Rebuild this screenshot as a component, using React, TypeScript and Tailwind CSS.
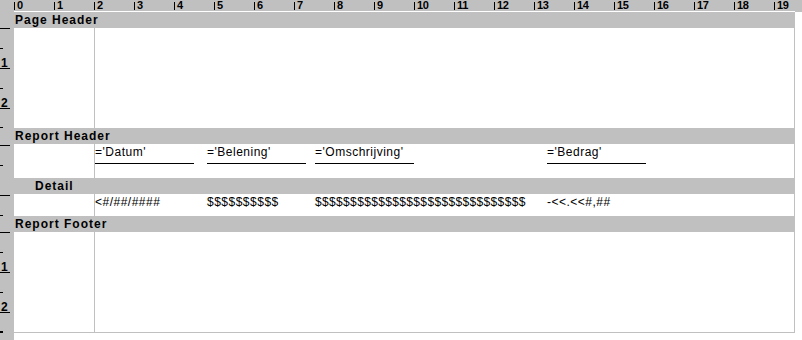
import React, { FC, ReactNode } from 'react';

type TMark = { y: number; kind: 'line' | 'tick' | 'num'; label?: string };

const RulerMarks: FC<{ height: number; marks: TMark[] }> = ({ height, marks }) => (
  <svg width={14} height={height} className="block shrink-0 bg-[#c0c0c0]">
    {marks.map((mark, index) => {
      if (mark.kind === 'tick') {
        return <rect key={index} x={0} y={mark.y} width={3} height={1} fill="#000" />;
      }
      if (mark.kind === 'line') {
        return <rect key={index} x={0} y={mark.y} width={10} height={1} fill="#000" />;
      }
      return (
        <g key={index}>
          <text
            x={1}
            y={mark.y - 1}
            fontSize={12}
            fontWeight={700}
            fontFamily="Liberation Sans, Arial, sans-serif"
            fill="#000"
          >
            {mark.label}
          </text>
          <rect x={0} y={mark.y} width={10} height={1} fill="#000" />
        </g>
      );
    })}
  </svg>
);

const TopRuler: FC = () => (
  <>
    <div className="flex h-[11px] bg-[#c0c0c0]">
      <div className="w-[14px] shrink-0" />
      {Array.from({ length: 20 }, (_, i) => (
        <div key={i} className={`shrink-0 flex items-start ${i === 19 ? 'w-[28px]' : 'w-[40px]'}`}>
          <div className="w-px h-[8px] mt-[2px] bg-black" />
          <span className="ml-[2px] text-[11px] font-bold leading-[11px] tracking-[-0.3px]">{i}</span>
        </div>
      ))}
    </div>
    <div className="flex h-px">
      <div className="w-[14px] bg-[#c0c0c0]" />
      <div className="w-[781px] bg-white" />
      <div className="flex-1 bg-[#c0c0c0]" />
    </div>
  </>
);

const Band: FC<{ title: string; indent?: boolean }> = ({ title, indent }) => (
  <div className="flex h-[16px]">
    <div className="w-[14px] shrink-0 bg-[#c0c0c0]" />
    <div
      className={`w-[781px] bg-[#c0c0c0] text-[12px] font-bold leading-[16px] tracking-[1px] ${
        indent ? 'pl-[21px]' : 'pl-px'
      }`}
    >
      {title}
    </div>
  </div>
);

interface BodyProps {
  height: number;
  marks: TMark[];
  last?: boolean;
  children?: ReactNode;
}

const Body: FC<BodyProps> = ({ height, marks, last, children }) => (
  <div className="flex">
    <RulerMarks height={height + (last ? 1 : 0)} marks={marks} />
    <div className="w-[781px] flex bg-white" style={{ height: height + (last ? 1 : 0) }}>
      <div className={`w-[80px] shrink-0 ${last ? 'border-b border-[#c0c0c0]' : ''}`} />
      <div
        className={`flex-1 flex border-l border-r border-[#c0c0c0] ${
          last ? 'border-b' : ''
        }`}
      >
        {children}
      </div>
    </div>
  </div>
);

const fieldText = 'text-[12px] leading-[14px] tracking-[0.5px] whitespace-nowrap';

const HeaderField: FC<{ text: string; className?: string }> = ({ text, className = '' }) => (
  <div className={`w-[99px] h-[20px] pt-px border-b border-black ${fieldText} ${className}`}>
    {text}
  </div>
);

const DetailField: FC<{ text: string; className?: string }> = ({ text, className = '' }) => (
  <div className={`w-[99px] pt-px overflow-visible ${fieldText} ${className}`}>{text}</div>
);

const bigMarks: TMark[] = [
  { y: 0, kind: 'line' },
  { y: 20, kind: 'tick' },
  { y: 40, kind: 'num', label: '1' },
  { y: 60, kind: 'tick' },
  { y: 80, kind: 'num', label: '2' },
  { y: 99, kind: 'tick' },
];

const App: FC = () => (
  <div className="w-[802px] h-[340px] bg-white overflow-hidden text-black font-['Liberation_Sans',Arial,sans-serif]">
    <TopRuler />

    <Band title="Page Header" />
    <Body height={100} marks={bigMarks} />

    <Band title="Report Header" />
    <Body height={34} marks={[{ y: 1, kind: 'line' }, { y: 21, kind: 'tick' }]}>
      <HeaderField text="='Datum'" />
      <HeaderField text="='Belening'" className="ml-[13px]" />
      <HeaderField text="='Omschrijving'" className="ml-[9px]" />
      <HeaderField text="='Bedrag'" className="ml-[133px]" />
    </Body>

    <Band title="Detail" indent />
    <Body height={22} marks={[{ y: 1, kind: 'line' }, { y: 21, kind: 'tick' }]}>
      <DetailField text="<#/##/####" />
      <DetailField text="$$$$$$$$$$" className="ml-[13px]" />
      <DetailField text="$$$$$$$$$$$$$$$$$$$$$$$$$$$$$$" className="ml-[9px] tracking-[0.35px]" />
      <DetailField text="-<<.<<#,##" className="ml-[133px]" />
    </Body>

    <Band title="Report Footer" />
    <Body height={100} marks={bigMarks.concat([{ y: 100, kind: 'tick' }])} last />

    <div className="flex h-[8px]">
      <div className="w-[14px] bg-[#c0c0c0]" />
    </div>
  </div>
);

export default App;
